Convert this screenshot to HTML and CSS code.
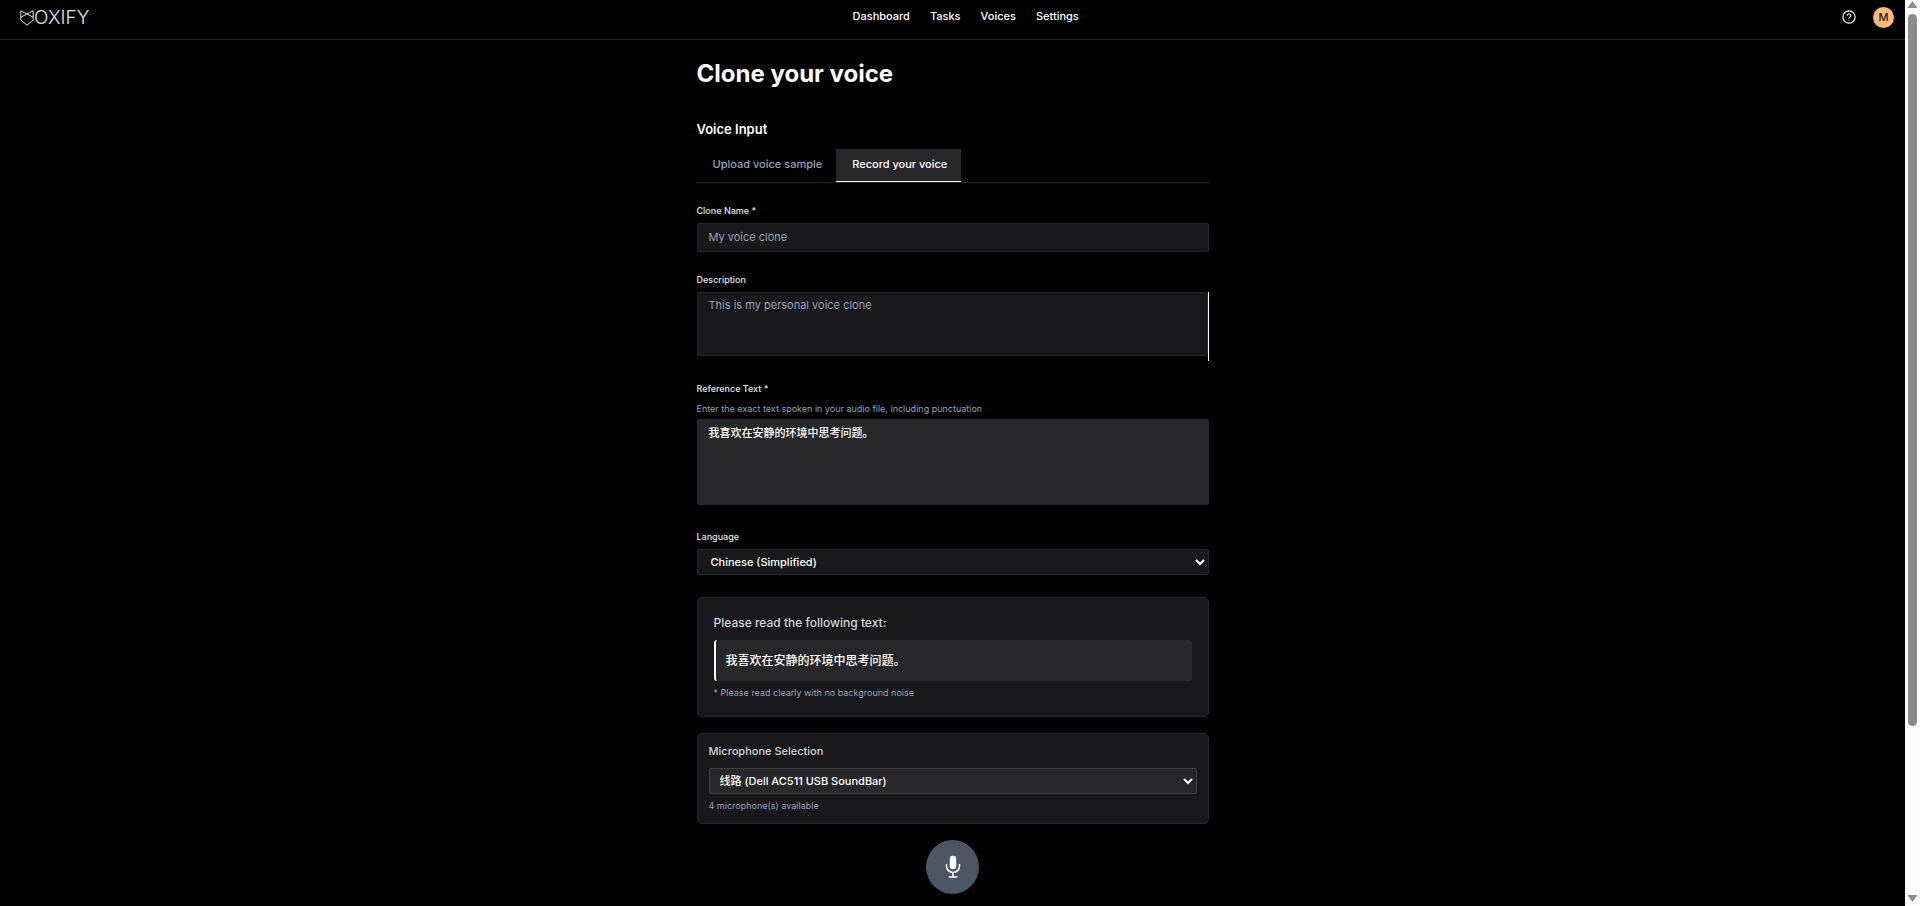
FILE: index.html
```html
<!DOCTYPE html>
<html lang="en">
<head>
<meta charset="utf-8">
<title>Clone your voice</title>
<meta name="viewport" content="width=device-width, initial-scale=1">
<link rel="stylesheet" href="styles.css">
</head>
<body>
<header class="topbar">
  <a class="brand" href="#" aria-label="Voxify">
    <svg class="brand-mark" viewBox="0 0 14 16" fill="none" stroke="currentColor" stroke-width="1" stroke-linejoin="round" aria-hidden="true"><path d="M.8.8 13.2 7.2V.8L.8 7.2zM.8 7.2V10L7 15.2 13.2 10V7.2"/></svg>
    <span class="brand-name">OXIFY</span>
  </a>
  <nav class="nav">
    <a href="#">Dashboard</a>
    <a href="#">Tasks</a>
    <a href="#">Voices</a>
    <a href="#">Settings</a>
  </nav>
  <div class="account">
    <button class="help" type="button" aria-label="Help">
      <svg viewBox="0 0 24 24" fill="none" stroke="currentColor" stroke-width="2" stroke-linecap="round" stroke-linejoin="round" aria-hidden="true"><circle cx="12" cy="12" r="10.5"/><path d="M8.8 9a3.3 3.3 0 0 1 6.4 1c0 2.200-3.200 2.600-3.200 4M12 17.500v.1"/></svg>
    </button>
    <button class="avatar" type="button">M</button>
  </div>
</header>

<main class="content">
  <h1 class="title">Clone your voice</h1>
  <h2 class="section-title">Voice Input</h2>
  <div class="tabs" role="tablist">
    <button class="tab" type="button" role="tab" aria-selected="false">Upload voice sample</button>
    <button class="tab tab-active" type="button" role="tab" aria-selected="true">Record your voice</button>
  </div>

  <form class="form">
    <div class="field">
      <label class="label" for="clone-name">Clone Name *</label>
      <input class="control" id="clone-name" type="text" placeholder="My voice clone">
    </div>
    <div class="field">
      <label class="label" for="description">Description</label>
      <div class="edge">
        <textarea class="control description" id="description" placeholder="This is my personal voice clone"></textarea>
      </div>
    </div>
    <div class="field">
      <label class="label" for="reference">Reference Text *</label>
      <p class="hint">Enter the exact text spoken in your audio file, including punctuation</p>
      <textarea class="control reference" id="reference">我喜欢在安静的环境中思考问题。</textarea>
    </div>
    <div class="field">
      <label class="label" for="language">Language</label>
      <select class="control select" id="language"><option>Chinese (Simplified)</option></select>
    </div>

    <section class="card prompt">
      <h3 class="prompt-title">Please read the following text:</h3>
      <p class="quote">我喜欢在安静的环境中思考问题。</p>
      <p class="hint">* Please read clearly with no background noise</p>
    </section>

    <section class="card microphone">
      <label class="microphone-label" for="microphone">Microphone Selection</label>
      <select class="control select select-raised" id="microphone"><option>线路 (Dell AC511 USB SoundBar)</option></select>
      <p class="hint">4 microphone(s) available</p>
    </section>

    <button class="record" type="button" aria-label="Start recording">
      <svg viewBox="0 0 16 24" fill="none" stroke="currentColor" stroke-width="1.500" stroke-linecap="round" aria-hidden="true"><rect x="5.500" y="1.500" width="5" height="12" rx="2.500" fill="currentColor"/><path d="M1.500 9.500V11a6.500 6.500 0 0 0 13 0V9.500M8 17.500V22M4.200 22h7.600"/></svg>
    </button>
  </form>
</main>

<div class="scrollbar" aria-hidden="true">
  <svg class="scroll-arrow" viewBox="0 0 9 7"><path d="M4.500 0 9 6.200V7H0v-.8z"/></svg>
  <div class="scroll-track"><div class="scroll-thumb"></div></div>
  <svg class="scroll-arrow" viewBox="0 0 9 7"><path d="M4.500 7 9 .8V0H0v.8z"/></svg>
</div>
</body>
</html>
```
FILE: styles.css
```css
* {
  box-sizing: border-box;
}

body {
  margin: 0;
  padding-right: 15px;
  background: #000;
  color: #fff;
  font-family: Inter, "Noto Sans CJK SC", sans-serif;
  font-size: 11px;
  line-height: 16px;
}

h1, h2, h3, p {
  margin: 0;
}

button {
  font: inherit;
  color: inherit;
  border: 0;
  padding: 0;
  background: none;
  cursor: pointer;
}

a {
  color: inherit;
  text-decoration: none;
}

/* Top bar */
.topbar {
  display: flex;
  justify-content: space-between;
  align-items: center;
  height: 40px;
  padding: 0 11px 5px 20px;
  border-bottom: 1px solid #27272a;
}

.brand {
  display: flex;
  align-items: center;
  padding-top: 2px;
  color: #e4e4e7;
}

.brand-mark {
  width: 14px;
  height: 16px;
}

.brand-name {
  font-size: 19px;
  font-weight: 300;
}

.nav {
  display: flex;
  gap: 20px;
  padding-bottom: 2px;
  font-weight: 500;
}

.account {
  display: flex;
  align-items: center;
  gap: 17px;
}

.help,
.help svg {
  display: block;
  width: 14px;
  height: 14px;
}

.avatar {
  width: 21px;
  height: 21px;
  border-radius: 50%;
  background: #fdba74;
  color: #18181b;
  font-weight: 500;
}

/* Page column */
.content {
  width: 512px;
  max-width: 100%;
  margin: 0 auto;
  padding: 18px 0 12px;
}

.title {
  font-size: 24px;
  line-height: 32px;
  font-weight: 700;
}

.section-title {
  margin: 29px 0 10px;
  font-size: 13px;
  line-height: 20px;
  font-weight: 600;
}

.tabs {
  display: flex;
  border-bottom: 1px solid #27272a;
}

.tab {
  height: 33px;
  padding: 0 14px 2px 16px;
  border-bottom: 1px solid transparent;
  color: #94a3b8;
  font-weight: 500;
}

.tab-active {
  border-bottom-color: #fff;
  background: #27272a;
  color: #fff;
}

/* Form */
.form {
  display: flex;
  flex-direction: column;
  padding-top: 20px;
}

.field {
  display: flex;
  flex-direction: column;
}

.field + .field {
  margin-top: 20px;
}

.label {
  margin-bottom: 4px;
  font-size: 9px;
  font-weight: 500;
  color: #e4e4e7;
}

.control {
  display: block;
  width: 100%;
  margin: 0;
  padding: 4px 11px 6px;
  border: 1px solid #27272a;
  border-radius: 2px;
  outline: 0;
  background: #18181b;
  color: #fff;
  font: inherit;
  resize: none;
}

.control::placeholder {
  color: #94a3b8;
  opacity: 1;
}

input.control {
  height: 29px;
}

.edge {
  padding-bottom: 5px;
  border-right: 1px solid #fff;
}

.description {
  height: 64px;
}

.reference {
  height: 86px;
  margin: 2px 0 4px;
  padding-top: 5px;
  background: #27272a;
  font-weight: 500;
}

.select {
  height: 26px;
  padding: 0 9px;
  font-weight: 500;
}

.hint {
  font-size: 9px;
  color: #94a3b8;
}

/* Cards */
.card {
  border: 1px solid #27272a;
  border-radius: 5px;
  background: #18181b;
}

.prompt {
  margin-top: 22px;
  padding: 16px 16px 15px;
}

.prompt-title {
  font-size: 12px;
  line-height: 18px;
  font-weight: 500;
  color: #d4d4d8;
}

.quote {
  margin: 8px 0 4px;
  padding: 13px 10px 12px;
  border-left: 2px solid #fff;
  border-radius: 3px;
  background: #27272a;
  font-size: 12px;
  font-weight: 500;
}

.microphone {
  margin-top: 16px;
  padding: 9px 11px;
}

.microphone-label {
  display: block;
  margin-bottom: 9px;
  font-weight: 500;
  color: #d4d4d8;
}

.select-raised {
  margin-bottom: 4px;
  padding: 0 6px;
  border-color: #3f3f46;
  background: #27272a;
}

.record {
  display: grid;
  place-items: center;
  align-self: center;
  width: 53px;
  height: 54px;
  margin-top: 16px;
  border-radius: 50%;
  background: #4b5563;
}

.record svg {
  width: 16px;
  height: 24px;
}

/* Scroll bar along the window's right edge */
.scrollbar {
  position: fixed;
  inset: 0 0 0 auto;
  display: flex;
  flex-direction: column;
  align-items: center;
  gap: 6px;
  width: 15px;
  padding: 1px 1px 4px 0;
  background: #fcfcfc;
}

.scroll-arrow {
  width: 9px;
  height: 7px;
  fill: #8b8b8b;
}

.scroll-track {
  flex: 1;
  width: 9px;
}

.scroll-thumb {
  height: calc(100% - 163px);
  border-radius: 5px;
  background: #8b8b8b;
}
```
